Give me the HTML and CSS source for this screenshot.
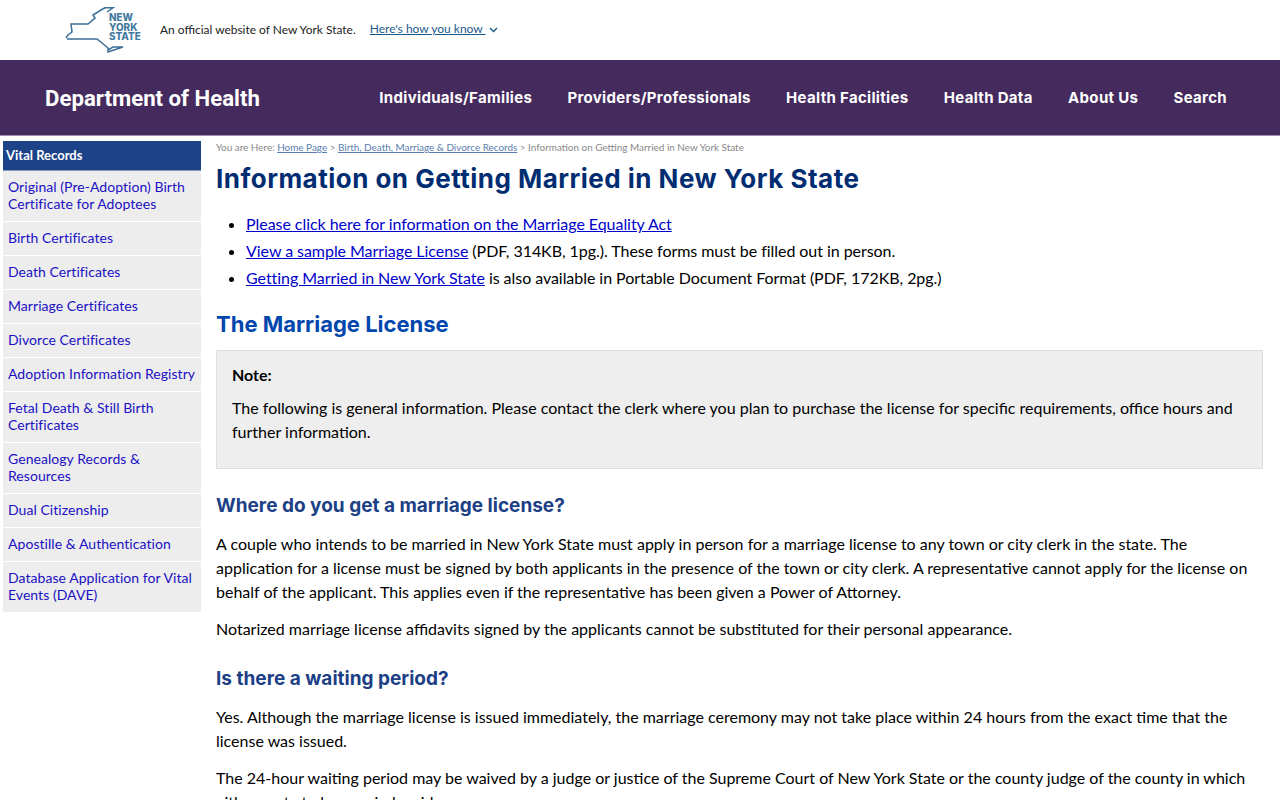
FILE: index.html
```html
<!DOCTYPE html>
<html lang="en">
<head>
<meta charset="utf-8">
<title>Information on Getting Married in New York State</title>
<link rel="stylesheet" href="styles.css">
</head>
<body>
<header class="topbar">
  <svg class="nys-logo" width="76" height="46" viewBox="0 0 76 46" aria-hidden="true">
    <path class="nys-outline" d="M1 31 L3 28 L7 25 L6 17 L23 17 L30 11 L28 8 L36 3 L40 0.8 L48 0.8 L42 5 M2 32 L32 32 L37 36 L43 41 L43 45 L58 40 L48 40 L43 43"/>
    <text class="nys-text" x="44" y="14">NEW</text>
    <text class="nys-text" x="44" y="23.5">YORK</text>
    <text class="nys-text" x="44" y="33">STATE</text>
  </svg>
  <span class="official">An official website of New York State.</span>
  <a class="know" href="#">Here's how you know&nbsp;</a>
  <svg class="chev" width="9" height="6" viewBox="0 0 9 6" aria-hidden="true"><path d="M1 1 L4.5 4.5 L8 1"/></svg>
</header>
<nav class="agency">
  <div class="agency-name">Department of Health</div>
  <ul class="agency-menu">
    <li>Individuals/Families</li>
    <li>Providers/Professionals</li>
    <li>Health Facilities</li>
    <li>Health Data</li>
    <li>About Us</li>
    <li>Search</li>
  </ul>
</nav>
<div class="page">
  <aside class="side">
    <div class="side-title">Vital Records</div>
    <a href="#">Original (Pre-Adoption) Birth Certificate for Adoptees</a>
    <a href="#">Birth Certificates</a>
    <a href="#">Death Certificates</a>
    <a href="#">Marriage Certificates</a>
    <a href="#">Divorce Certificates</a>
    <a href="#">Adoption Information Registry</a>
    <a href="#">Fetal Death &amp; Still Birth Certificates</a>
    <a href="#">Genealogy Records &amp; Resources</a>
    <a href="#">Dual Citizenship</a>
    <a href="#">Apostille &amp; Authentication</a>
    <a href="#">Database Application for Vital Events (DAVE)</a>
  </aside>
  <main class="content">
    <div class="crumbs">You are Here: <a href="#">Home Page</a> &gt; <a href="#">Birth, Death, Marriage &amp; Divorce Records</a> &gt; Information on Getting Married in New York State</div>
    <h1>Information on Getting Married in New York State</h1>
    <ul class="links">
      <li><a href="#">Please click here for information on the Marriage Equality Act</a></li>
      <li><a href="#">View a sample Marriage License</a> (PDF, 314KB, 1pg.). These forms must be filled out in person.</li>
      <li><a href="#">Getting Married in New York State</a> is also available in Portable Document Format (PDF, 172KB, 2pg.)</li>
    </ul>
    <h2>The Marriage License</h2>
    <section class="note">
      <p class="note-head">Note:</p>
      <p>The following is general information. Please contact the clerk where you plan to purchase the license for specific requirements, office hours and further information.</p>
    </section>
    <h3>Where do you get a marriage license?</h3>
    <p>A couple who intends to be married in New York State must apply in person for a marriage license to any town or city clerk in the state. The application for a license must be signed by both applicants in the presence of the town or city clerk. A representative cannot apply for the license on behalf of the applicant. This applies even if the representative has been given a Power of Attorney.</p>
    <p>Notarized marriage license affidavits signed by the applicants cannot be substituted for their personal appearance.</p>
    <h3>Is there a waiting period?</h3>
    <p>Yes. Although the marriage license is issued immediately, the marriage ceremony may not take place within 24 hours from the exact time that the license was issued.</p>
    <p>The 24-hour waiting period may be waived by a judge or justice of the Supreme Court of New York State or the county judge of the county in which either party to be married resides.</p>
  </main>
</div>
</body>
</html>
```
FILE: styles.css
```css
html, body { margin: 0; padding: 0; height: 800px; overflow: hidden; background: #fff; }
body { font-family: "Lato", "Liberation Sans", sans-serif; color: #000; font-size: 16px; }
a { color: #0000cc; }

.topbar { height: 60px; display: flex; align-items: center; padding-left: 65px; box-sizing: border-box; }
.nys-logo { flex: none; margin-right: 19px; }
.nys-outline { fill: none; stroke: #3c6e96; stroke-width: 1.5; }
.nys-text { font: 800 9.9px/1 "Inter", sans-serif; fill: #44799f; }
.official { font-size: 11.95px; color: #222; margin-right: 14px; margin-top: -1px; }
.know { font-size: 12px; color: #1a5a8a; margin-right: 3px; margin-top: -3px; }
.chev { fill: none; }
.chev path { stroke: #1a5a8a; stroke-width: 1.4; fill: none; }

.agency { height: 75px; background: #452a5e; border-bottom: 1px solid #9c8fb0; display: flex; align-items: center; justify-content: space-between; padding: 0 53px 0 45px; color: #fff; }
.agency-name { font: 700 22.2px "Roboto", sans-serif; }
.agency-menu { list-style: none; display: flex; gap: 35.3px; margin: 0; padding: 0; font: 700 15px "Inter", sans-serif; letter-spacing: 0.32px; }

.page { display: flex; align-items: flex-start; padding: 5px 17px 0 3px; gap: 15px; }
.side { width: 198px; flex: none; display: flex; flex-direction: column; }
.side-title { height: 30px; background: #1c4288; color: #fff; font: 700 13px/29px "Lato", sans-serif; padding-left: 3px; border-bottom: 1px solid #8797b5; box-sizing: border-box; }
.side a { display: block; padding: 7px 2px 9px 5px; background: #ededed; border-bottom: 1px solid #fff; font-size: 14px; line-height: 17px; color: #2010c4; text-decoration: none; letter-spacing: 0.05px; }

.content { flex: 1; min-width: 0; font-size: 16px; line-height: 24px; }
.crumbs { font-size: 9.92px; line-height: 12px; color: #888; }
.crumbs a { color: #5a7cae; }
h1 { font: 700 26px/34px "Inter", sans-serif; color: #002d72; margin: 9px 0 16px; letter-spacing: 0.48px; }
.links { margin: 0 0 19px; padding-left: 30px; letter-spacing: -0.05px; }
.links li { margin-bottom: 3px; }
h2 { font: 700 22px/30px "Inter", sans-serif; color: #0046ad; margin: 0 0 11px; }
.note { background: #eee; border: 1px solid #ddd; padding: 12px 15px 24px; margin-bottom: 24px; }
.note p { margin: 0; }
.note-head { font-weight: 700; margin-bottom: 9px !important; }
h3 { font: 700 19px/26px "Inter", sans-serif; color: #1c3f85; margin: 0 0 13px; }
.content > p { margin: 0 0 13px; }
.content > p + h3 { margin-top: 25px; }
```
